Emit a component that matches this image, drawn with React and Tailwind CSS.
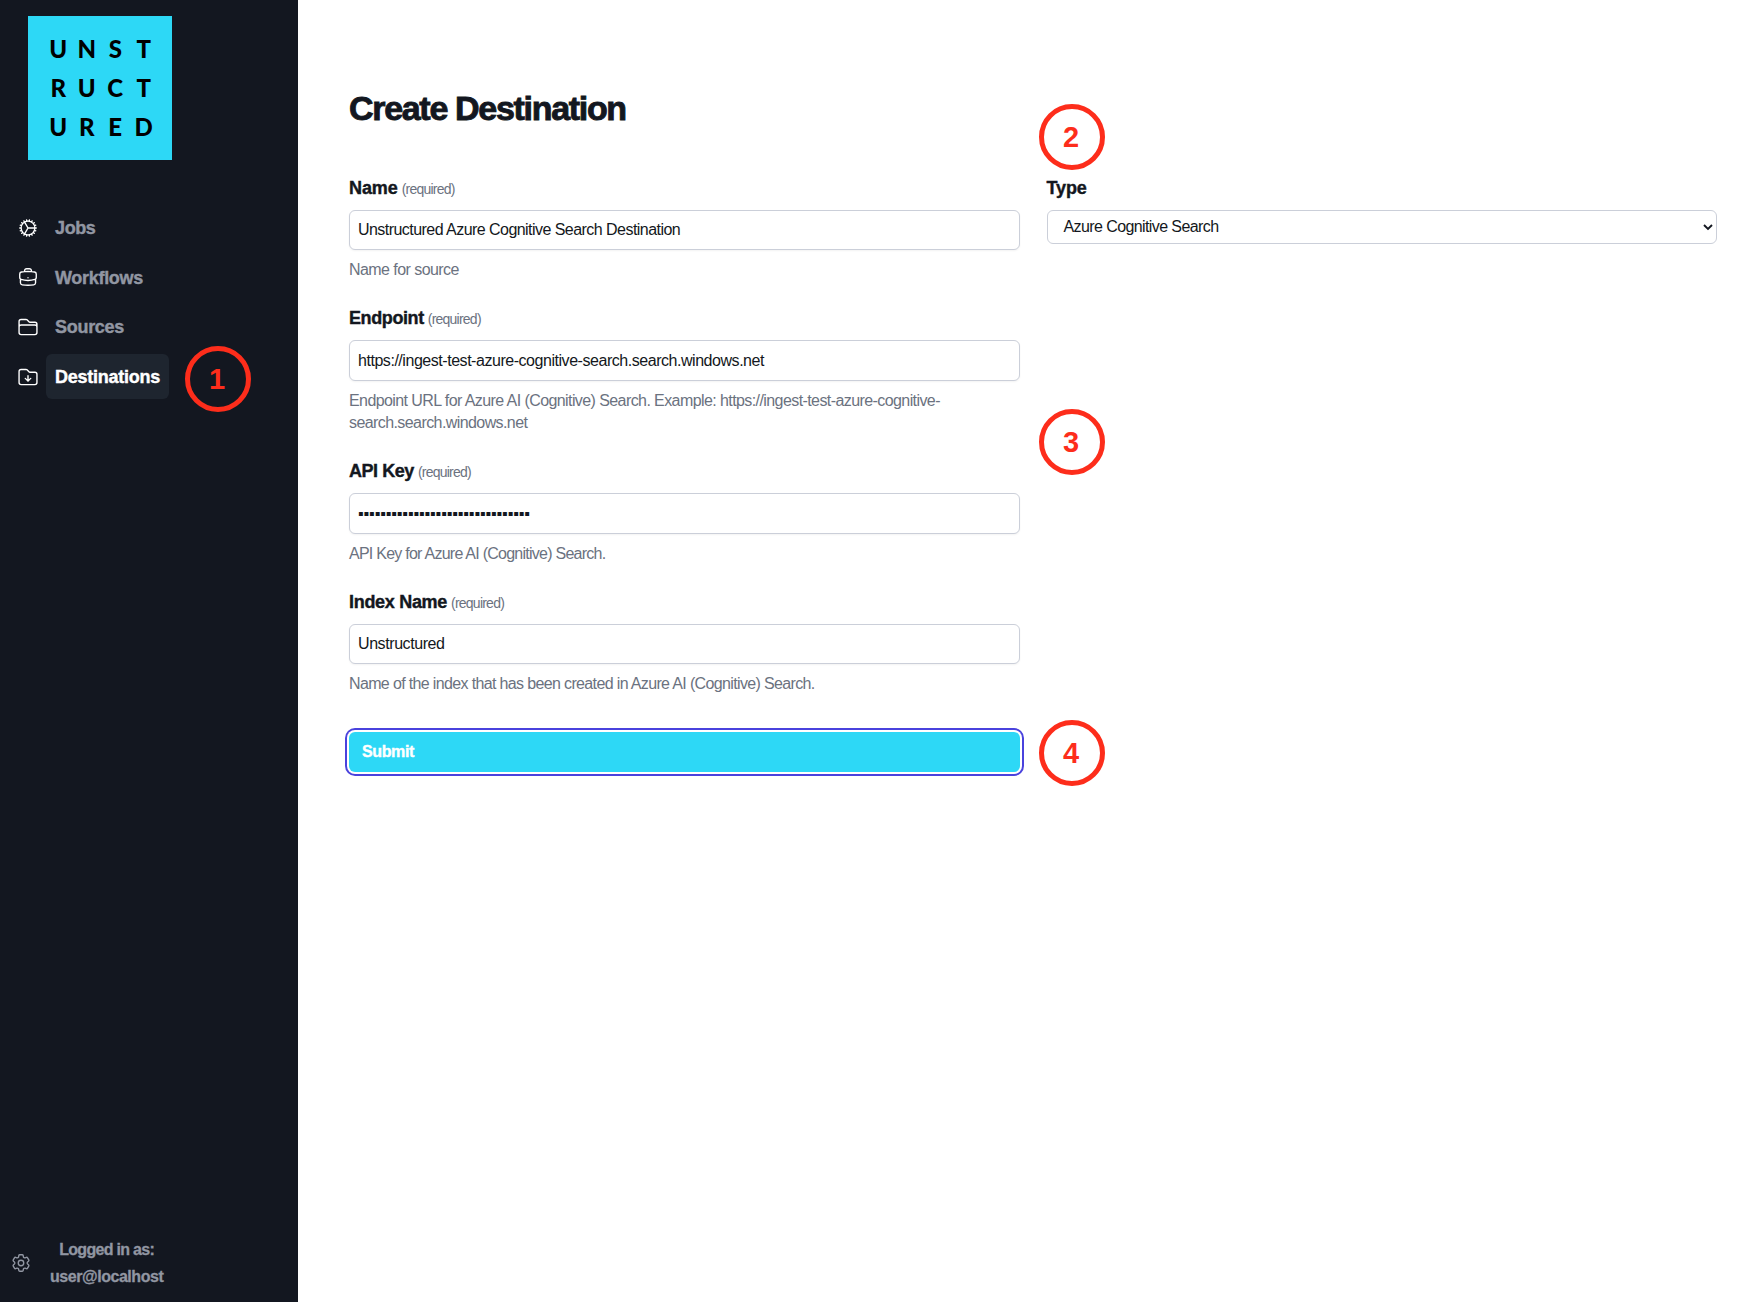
import {
  HiOutlineCog,
  HiOutlineBriefcase,
  HiOutlineFolder,
  HiOutlineFolderArrowDown,
  HiOutlineCog6Tooth,
} from "react-icons/hi2";

const logoRows = ["UNST", "RUCT", "URED"];

const navItems = [
  { label: "Jobs", Icon: HiOutlineCog, tracking: "tracking-[-0.38px]" },
  { label: "Workflows", Icon: HiOutlineBriefcase, tracking: "tracking-[-0.3px]" },
  { label: "Sources", Icon: HiOutlineFolder, tracking: "tracking-[-0.29px]" },
  { label: "Destinations", Icon: HiOutlineFolderArrowDown, tracking: "tracking-[-0.25px]", active: true },
];

const fields = [
  {
    label: "Name",
    labelTracking: "tracking-[-0.1px]",
    value: "Unstructured Azure Cognitive Search Destination",
    valueTracking: "tracking-[-0.545px]",
    help: "Name for source",
    helpTracking: "tracking-[-0.56px]",
    block: "h-[130px]",
    box: "h-10",
  },
  {
    label: "Endpoint",
    labelTracking: "tracking-[-0.4px]",
    value: "https://ingest-test-azure-cognitive-search.search.windows.net",
    valueTracking: "tracking-[-0.459px]",
    help: "Endpoint URL for Azure AI (Cognitive) Search. Example: https://ingest-test-azure-cognitive-search.search.windows.net",
    helpTracking: "tracking-[-0.585px]",
    block: "h-[153px]",
    box: "h-[41px]",
  },
  {
    label: "API Key",
    labelTracking: "tracking-[-0.45px]",
    value: "▪".repeat(31),
    valueTracking: "tracking-[-0.13px]",
    help: "API Key for Azure AI (Cognitive) Search.",
    helpTracking: "tracking-[-0.75px]",
    block: "h-[131px]",
    box: "h-[41px]",
  },
  {
    label: "Index Name",
    labelTracking: "tracking-[-0.3px]",
    value: "Unstructured",
    valueTracking: "tracking-[-0.42px]",
    help: "Name of the index that has been created in Azure AI (Cognitive) Search.",
    helpTracking: "tracking-[-0.645px]",
    block: "h-[144px]",
    box: "h-10",
  },
];

function Marker({ n, place }) {
  return (
    <div
      className={`absolute flex size-[66px] items-center justify-center rounded-full border-[5px] border-[#fd2d1b] pr-0.5 text-[29px] leading-none font-bold text-[#fd2d1b] ${place}`}
    >
      {n}
    </div>
  );
}

function Sidebar() {
  return (
    <aside className="flex w-[298px] shrink-0 flex-col bg-[#131720]">
      <div className="mt-4 ml-7 flex size-36 flex-col justify-center bg-[#2dd8f6] pr-[14px] pl-4 font-['Lato'] text-black">
        {logoRows.map((row) => (
          <div key={row} className="grid h-[39px] grid-cols-4 items-center text-center text-[24px] leading-none font-black">
            {row.split("").map((c, i) => (
              <span key={i}>{c}</span>
            ))}
          </div>
        ))}
      </div>
      <nav className="mt-[45px] flex flex-col gap-[4.7px] pl-[17px]">
        {navItems.map(({ label, Icon, tracking, active }) => (
          <div key={label} className="flex h-[45px] items-center">
            <Icon className="size-[22px] text-white" />
            <span
              className={`ml-[7px] flex h-[45px] items-center rounded-md px-[9px] pt-0.5 text-[18px] font-bold [-webkit-text-stroke:0.4px] ${tracking} ${
                active ? "bg-[#1e252f] text-white" : "text-[#9196a2]"
              }`}
            >
              {label}
            </span>
          </div>
        ))}
      </nav>
      <div className="mt-auto mb-3 flex items-center pl-[10px] text-[#9196a2]">
        <HiOutlineCog6Tooth className="size-[22px]" />
        <div className="ml-[18px] text-center text-base leading-[27px] font-bold [-webkit-text-stroke:0.3px]">
          <p className="tracking-[-0.7px]">Logged in as:</p>
          <p className="tracking-[-0.45px]">user@localhost</p>
        </div>
      </div>
    </aside>
  );
}

function Field({ label, labelTracking, value, valueTracking, help, helpTracking, block, box }) {
  return (
    <div className={block}>
      <label className="flex h-7 items-baseline text-[18px] leading-7 font-bold">
        <span className={`[-webkit-text-stroke:0.4px] ${labelTracking}`}>{label}</span>
        <span className="ml-1 text-sm font-normal tracking-[-0.77px] text-[#6b7280]">(required)</span>
      </label>
      <input
        readOnly
        value={value}
        className={`mt-2 block w-full rounded-md border border-[#cbcfd9] bg-white px-2 text-base shadow-xs outline-none ${valueTracking} ${box}`}
      />
      <p className={`mt-[9px] max-w-[620px] text-base leading-[22px] text-[#6b7280] ${helpTracking}`}>{help}</p>
    </div>
  );
}

export default function App() {
  return (
    <div className="relative flex h-[1302px] w-[1745px] overflow-hidden bg-white font-['Liberation_Sans',Arial,sans-serif] text-[#131720]">
      <Sidebar />
      <main className="flex-1 pt-[88px] pr-7 pl-[51px]">
        <h1 className="text-[34px] leading-10 font-bold tracking-[-1.31px] [-webkit-text-stroke:0.9px]">Create Destination</h1>
        <div className="mt-[46px] grid grid-cols-2 gap-[27px]">
          <form>
            {fields.map((f) => (
              <Field key={f.label} {...f} />
            ))}
            <button
              type="button"
              className="block h-10 w-full rounded-md bg-[#2dd8f6] px-[13px] text-left text-base font-bold tracking-[-0.37px] text-white ring-2 ring-[#4a42dd] ring-offset-2 [-webkit-text-stroke:0.4px]"
            >
              Submit
            </button>
          </form>
          <div>
            <label className="block h-7 text-[18px] leading-7 font-bold tracking-[-0.1px] [-webkit-text-stroke:0.4px]">Type</label>
            <div className="mt-2 flex h-[34px] items-center justify-between rounded-md border border-[#cbcfd9] pr-[3px] pl-4 text-base tracking-[-0.595px]">
              Azure Cognitive Search
              <svg viewBox="0 0 10 8" className="h-2 w-[10px]" fill="none" stroke="currentColor" strokeWidth="1.9">
                <path d="M1 2 L5 6 L9 2" />
              </svg>
            </div>
          </div>
        </div>
      </main>
      <Marker n="1" place="left-[185px] top-[346px]" />
      <Marker n="2" place="left-[1039px] top-[104px]" />
      <Marker n="3" place="left-[1039px] top-[409px]" />
      <Marker n="4" place="left-[1039px] top-[720px]" />
    </div>
  );
}
